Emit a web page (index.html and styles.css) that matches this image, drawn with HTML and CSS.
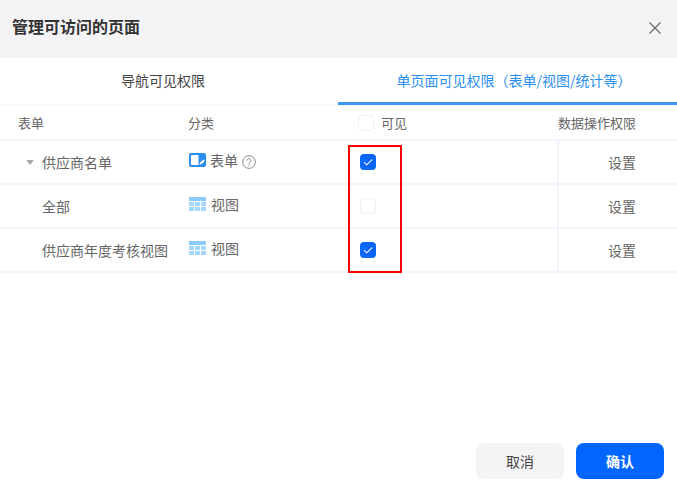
FILE: index.html
```html
<!DOCTYPE html>
<html lang="zh-CN">
<head>
<meta charset="utf-8">
<title>管理可访问的页面</title>
<link rel="stylesheet" href="styles.css">
</head>
<body>
<div class="dialog">
  <header class="head">
    <h1 class="title">管理可访问的页面</h1>
    <svg class="close" width="14" height="14" viewBox="0 0 14 14"><path d="M1.5 1.5l11 11M12.5 1.5l-11 11" stroke="#666" stroke-width="1.1" fill="none"/></svg>
  </header>
  <nav class="tabs">
    <div class="tab">导航可见权限</div>
    <div class="tab active">单页面可见权限（表单/视图/统计等）</div>
  </nav>
  <div class="row row-head">
    <div class="c-name head-name">表单</div>
    <div class="c-type">分类</div>
    <div class="c-vis"><span class="box"></span><span class="vis-label">可见</span></div>
    <div class="c-op">数据操作权限</div>
  </div>
  <div class="row">
    <div class="c-name"><span class="caret"></span>供应商名单</div>
    <div class="c-type lifted">
      <svg class="ico" width="17" height="14" viewBox="0 0 17 14"><rect width="17" height="14" rx="2" fill="#2b8ff0"/><rect x="2" y="2" width="7.5" height="10" rx=".5" fill="#fff"/><path d="M10.5 11.8l.6-2.2 3.2-3.2 1.5 1.5-3.2 3.2z" fill="#fff"/></svg>
      <span class="type-form">表单</span>
      <svg class="help" width="14" height="14" viewBox="0 0 15 15"><circle cx="7.5" cy="7.5" r="6.8" fill="none" stroke="#808080"/><path d="M5.4 5.9a2.1 2.1 0 1 1 3.3 1.7c-.8.5-1.2.9-1.2 1.7" fill="none" stroke="#808080"/><circle cx="7.5" cy="11" r=".7" fill="#808080"/></svg>
    </div>
    <div class="c-vis cell-vis"><span class="box on"><svg width="16" height="16" viewBox="0 0 16 16"><path d="M4 8.2l2.8 2.6L12 5.6" stroke="#fff" stroke-width="1.1" fill="none"/></svg></span></div>
    <div class="c-op cell-op">设置</div>
  </div>
  <div class="row">
    <div class="c-name">全部</div>
    <div class="c-type lifted">
      <svg class="ico" width="17" height="14" viewBox="0 0 17 14"><rect width="17" height="4" fill="#8ccbfb"/><rect y="5" width="5" height="4" fill="#a3d7fc"/><rect x="6" y="5" width="5" height="4" fill="#a3d7fc"/><rect x="12" y="5" width="5" height="4" fill="#a3d7fc"/><rect y="10" width="5" height="4" fill="#a3d7fc"/><rect x="6" y="10" width="5" height="4" fill="#a3d7fc"/><rect x="12" y="10" width="5" height="4" fill="#a3d7fc"/></svg>
      <span>视图</span>
    </div>
    <div class="c-vis cell-vis"><span class="box"></span></div>
    <div class="c-op cell-op">设置</div>
  </div>
  <div class="row">
    <div class="c-name">供应商年度考核视图</div>
    <div class="c-type lifted">
      <svg class="ico" width="17" height="14" viewBox="0 0 17 14"><rect width="17" height="4" fill="#8ccbfb"/><rect y="5" width="5" height="4" fill="#a3d7fc"/><rect x="6" y="5" width="5" height="4" fill="#a3d7fc"/><rect x="12" y="5" width="5" height="4" fill="#a3d7fc"/><rect y="10" width="5" height="4" fill="#a3d7fc"/><rect x="6" y="10" width="5" height="4" fill="#a3d7fc"/><rect x="12" y="10" width="5" height="4" fill="#a3d7fc"/></svg>
      <span>视图</span>
    </div>
    <div class="c-vis cell-vis"><span class="box on"><svg width="16" height="16" viewBox="0 0 16 16"><path d="M4 8.2l2.8 2.6L12 5.6" stroke="#fff" stroke-width="1.1" fill="none"/></svg></span></div>
    <div class="c-op cell-op">设置</div>
  </div>
  <div class="spacer"></div>
  <footer class="foot">
    <button class="btn">取消</button>
    <button class="btn primary">确认</button>
  </footer>
  <div class="highlight"></div>
</div>
</body>
</html>
```
FILE: styles.css
```css
* { box-sizing: border-box; }
html, body { margin: 0; height: 100%; }
body { background: #fff; font-family: "Noto Sans CJK SC", "Liberation Sans", sans-serif; font-size: 14px; color: #666; overflow: hidden; }
.dialog { position: relative; width: 677px; height: 487px; display: flex; flex-direction: column; }
.head { height: 58px; flex: none; background: #f4f4f6; display: flex; align-items: center; justify-content: space-between; padding: 0 15px 6px 12px; }
.title { margin: 0; font-size: 16px; font-weight: 700; color: #333; line-height: 24px; }
.close { margin-top: 4px; }
.tabs { height: 48px; flex: none; display: flex; border-bottom: 2px solid #f7f7f9; }
.tab { width: 338px; height: 47px; padding: 10px 12px 0 0; text-align: center; color: #444; line-height: 24px; }
.tab.active { flex: 1; color: #2b8ff0; border-bottom: 3px solid #3d97f3; padding: 10px 0 0 13px; }
.row { height: 44px; flex: none; display: flex; align-items: center; border-bottom: 2px solid #f2f6fc; }
.row-head { height: 35px; font-size: 13px; }
.c-name { width: 189px; padding-left: 42px; display: flex; align-items: center; position: relative; padding-bottom: 1px; }
.head-name { padding-left: 18px; }
.c-type { width: 169px; display: flex; align-items: center; gap: 5px; }
.row-head .c-type { margin-left: -1px; width: 170px; }
.lifted { padding-bottom: 4px; }
.type-form { margin-left: -1px; }
.help { margin: 4px 0 0 -1px; }
.c-vis { width: 199px; display: flex; align-items: center; }
.cell-vis { padding-left: 2px; }
.c-op { flex: 1; height: 100%; display: flex; align-items: center; padding-right: 40px; justify-content: flex-end; white-space: nowrap; }
.row-head .c-op { padding-bottom: 1px; padding-right: 41px; }
.cell-op { border-left: 2px solid #f2f6fc; padding-right: 41px; }
.box { width: 16px; height: 16px; border: 1px solid #f0f0f2; border-radius: 4px; display: block; background: #fff; }
.box.on { border: 0; background: #0a66f5; }
.box svg { display: block; }
.vis-label { margin-left: 7px; }
.caret { position: absolute; left: 26px; top: 50%; margin-top: -2px; width: 0; height: 0; border-left: 4px solid transparent; border-right: 4px solid transparent; border-top: 5px solid #a8a8ae; }
.ico { flex: none; }
.spacer { flex: 1; }
.foot { flex: none; height: 44px; display: flex; justify-content: flex-end; gap: 12px; padding: 0 13px 8px 0; }
.btn { width: 88px; height: 36px; border: 0; border-radius: 8px; background: #f4f4f6; color: #444; font: inherit; font-size: 14px; }
.btn.primary { background: #0066ff; color: #fff; font-weight: 700; }
.highlight { position: absolute; left: 348px; top: 145px; width: 54px; height: 128px; border: 2px solid #f00; pointer-events: none; }
```
